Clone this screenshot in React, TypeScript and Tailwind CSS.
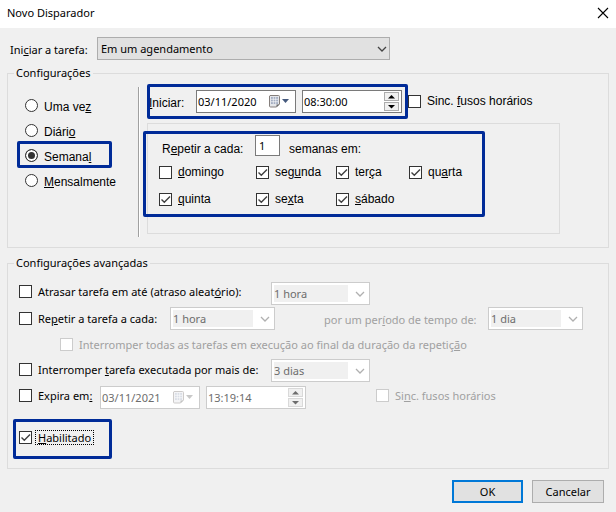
import React, { useState } from 'react';

interface CheckProps {
  children: React.ReactNode;
  defaultChecked?: boolean;
  disabled?: boolean;
  focused?: boolean;
  className?: string;
}

const Check: React.FC<CheckProps> = ({ children, defaultChecked, disabled, focused, className = '' }) => (
  <label className={`flex items-center gap-[6px] leading-[13px] whitespace-nowrap ${disabled ? 'text-[#a0a0a0]' : ''} ${className}`}>
    <span className="grid shrink-0">
      <input
        type="checkbox"
        defaultChecked={defaultChecked}
        disabled={disabled}
        className="peer col-start-1 row-start-1 appearance-none size-[13px] bg-white border border-[#333] disabled:border-[#ccc]"
      />
      <svg viewBox="0 0 13 13" className="col-start-1 row-start-1 size-[13px] pointer-events-none hidden peer-checked:block">
        <path d="M2.5 6.5 L5.3 9.3 L11 3.4" fill="none" stroke="#404040" strokeWidth="1.4" />
      </svg>
    </span>
    <span className={focused ? '-ml-[3px] px-[2px] border border-dotted border-black' : ''}>{children}</span>
  </label>
);

const Highlight: React.FC<{ className: string }> = ({ className }) => (
  <span className={`absolute border-3 border-[#002b98] rounded-[2px] pointer-events-none ${className}`} />
);

const Chevron: React.FC<{ color: string }> = ({ color }) => (
  <svg viewBox="0 0 19 17" className="w-[19px] h-[17px] shrink-0 pointer-events-none">
    <path d="M8 7 L12 11 L16 7" fill="none" stroke={color} strokeWidth="1.3" />
  </svg>
);

const DisabledSelect: React.FC<{ value: string; label: string; className: string }> = ({ value, label, className }) => (
  <div className={`flex items-center h-[23px] p-[2px] bg-white border border-[#ccc] shrink-0 ${className}`}>
    <select disabled aria-label={label} className="appearance-none flex-1 min-w-0 h-[17px] leading-[17px] bg-[#f0f0f0] text-[#6d6d6d]">
      <option>{value}</option>
    </select>
    <Chevron color="#b0b0b0" />
  </div>
);

const DateBox: React.FC<{ value: string; id?: string; disabled?: boolean }> = ({ value, id, disabled }) => (
  <div className={`flex items-center w-[100px] h-[23px] pl-px pr-[6px] bg-white border shrink-0 ${disabled ? 'border-[#ccc] text-[#6d6d6d]' : 'border-[#7a7a7a]'}`}>
    <input id={id} type="text" defaultValue={value} disabled={disabled} aria-label="Data" className="flex-1 min-w-0 bg-transparent outline-none" />
    <svg viewBox="0 0 20 13" className={`w-[20px] h-[13px] shrink-0 ${disabled ? 'opacity-40' : ''}`}>
      <path d="M1 .5 H9.5 Q10.5 .5 10.5 1.5 V9 L7.5 12 H1.5 Q.5 12 .5 11 V1 Z" fill="#e4e6ea" stroke="#857f7c" />
      <path d="M2 2 H9 V9 H2 Z" fill="#a4aec2" />
      <path d="M4.3 2 V9 M6.7 2 V9 M2 4.3 H9 M2 6.7 H9" stroke="#fff" strokeWidth=".6" />
      <path d="M7.5 12 V9.5 H10.5 Z" fill="#666" />
      <path d="M13 4 H20 L16.5 8 Z" fill={disabled ? '#777' : '#44597d'} />
    </svg>
  </div>
);

const TimeBox: React.FC<{ value: string; disabled?: boolean }> = ({ value, disabled }) => (
  <div className={`flex items-center w-[100px] h-[23px] pl-px pr-[2px] bg-white border shrink-0 ${disabled ? 'border-[#ccc] text-[#6d6d6d]' : 'border-[#7a7a7a]'}`}>
    <input type="text" defaultValue={value} disabled={disabled} aria-label="Hora" className="flex-1 min-w-0 bg-transparent outline-none" />
    <div className="flex flex-col gap-px shrink-0">
      {['M3 5.5 H10 L6.5 2 Z', 'M3 2 H10 L6.5 5.5 Z'].map((d, i) => (
        <button
          key={d}
          type="button"
          disabled={disabled}
          aria-label={i === 0 ? 'Aumentar' : 'Diminuir'}
          className="w-[15px] h-[9px] bg-[#f0f0f0] border border-[#acacac] disabled:border-[#d9d9d9]"
        >
          <svg viewBox="0 0 13 7" className="w-[13px] h-[7px]">
            <path d={d} fill={disabled ? '#6d6d6d' : '#000'} />
          </svg>
        </button>
      ))}
    </div>
  </div>
);

const frequencies = [
  { id: 'once', label: <>Uma ve<u>z</u></> },
  { id: 'daily', label: <>Diári<u>o</u></> },
  { id: 'weekly', label: <>Semana<u>l</u></> },
  { id: 'monthly', label: <><u>M</u>ensalmente</> },
];

const weekdays = [
  { id: 'dom', label: <><u>d</u>omingo</>, checked: false },
  { id: 'seg', label: <>seg<u>u</u>nda</>, checked: true },
  { id: 'ter', label: <>ter<u>ç</u>a</>, checked: true },
  { id: 'qua', label: <>qu<u>a</u>rta</>, checked: true },
  { id: 'qui', label: <><u>q</u>uinta</>, checked: true },
  { id: 'sex', label: <>se<u>x</u>ta</>, checked: true },
  { id: 'sab', label: <><u>s</u>ábado</>, checked: true },
];

const App: React.FC = () => {
  const [frequency, setFrequency] = useState<string>('weekly');

  return (
    <div className="min-h-screen bg-[#f0f0f0] text-black text-[11px] leading-4 font-['Noto_Sans','Open_Sans',sans-serif]">
      <header className="flex items-center justify-between h-7 px-[7px] pb-[2px] bg-white">
        <h1>Novo Disparador</h1>
        <button type="button" aria-label="Fechar">
          <svg viewBox="0 0 12 12" className="size-[12px]">
            <path d="M1 1 L11 11 M11 1 L1 11" stroke="#000" strokeWidth="1.1" />
          </svg>
        </button>
      </header>

      <form className="px-[7px] pt-[9px] pb-[10px]" onSubmit={(e) => e.preventDefault()}>
        <div className="flex items-center pl-[3px]">
          <label htmlFor="begin" className="w-[87px] pt-[2px] shrink-0">Ini<u>c</u>iar a tarefa:</label>
          <div className="flex items-center w-[293px] h-[23px] bg-[#e1e1e1] border border-[#adadad]">
            <select id="begin" className="appearance-none flex-1 h-full pl-[3px] outline-none">
              <option>Em um agendamento</option>
            </select>
            <Chevron color="#444" />
          </div>
        </div>

        <fieldset className="mt-[5px] pb-[10px] border border-[#dcdcdc]">
          <legend className="ml-[6px] px-[2px]">Configurações</legend>
          <div className="flex mt-[6px] text-[12px] font-['Liberation_Sans',Arial,sans-serif]">
            <div className="w-[130px] shrink-0 pl-[17px] pt-[6px]">
              {frequencies.map((f) => (
                <label key={f.id} className="relative flex items-center gap-[6px] h-[25px]">
                  <input
                    type="radio"
                    name="frequency"
                    checked={frequency === f.id}
                    onChange={() => setFrequency(f.id)}
                    className="appearance-none size-[13px] rounded-full border border-[#333] bg-white checked:bg-[#333] checked:shadow-[inset_0_0_0_2px_white]"
                  />
                  <span className="pt-[2px]">{f.label}</span>
                  {f.id === 'weekly' && <Highlight className="-left-2 w-[95px] -top-[2px] h-[27px]" />}
                </label>
              ))}
            </div>
            <div className="w-[2px] bg-white border-l border-[#a0a0a0] shrink-0" />
            <div className="flex-1 pl-[7px] pt-[3px] pb-[3px]">
              <div className="flex items-center gap-[6px] pl-[2px]">
                <div className="relative flex items-center">
                  <label htmlFor="start" className="w-[47px] pt-[2px]"><u>I</u>niciar:</label>
                  <div className="flex gap-[6px] text-[11px] font-['Noto_Sans','Open_Sans',sans-serif]">
                    <DateBox id="start" value="03/11/2020" />
                    <TimeBox value="08:30:00" />
                  </div>
                  <Highlight className="-left-[2px] -right-[6px] -top-[6px] -bottom-[6px]" />
                </div>
                <Check>Sinc. <u>f</u>usos horários</Check>
              </div>

              <div className="mt-[10px] mr-12 pl-[11px] pt-[11px] pb-[27px] border border-[#dcdcdc]">
                <div className="relative w-80">
                  <div className="flex items-center h-[21px] pl-[3px]">
                    <label htmlFor="every" className="w-[93px] pt-[6px]">R<u>e</u>petir a cada:</label>
                    <input
                      id="every"
                      type="text"
                      defaultValue="1"
                      className="w-[25px] h-[21px] px-[3px] bg-white border border-[#7a7a7a] outline-none text-[11px] font-['Noto_Sans','Open_Sans',sans-serif]"
                    />
                    <span className="pl-[9px] pt-[6px]">semanas em:</span>
                  </div>
                  <div className="grid grid-cols-[97px_80px_73px_1fr] gap-y-[14px] mt-[10px]">
                    {weekdays.map((d) => (
                      <Check key={d.id} defaultChecked={d.checked}>{d.label}</Check>
                    ))}
                  </div>
                  <Highlight className="-left-4 -right-[6px] -top-1 -bottom-[11px]" />
                </div>
              </div>
            </div>
          </div>
        </fieldset>

        <fieldset className="mt-[7px] pb-[23px] border border-[#dcdcdc]">
          <legend className="ml-[6px] px-[2px]">Configurações avançadas</legend>
          <div className="flex flex-col gap-[2px] pl-[11px] mt-[11px]">
            <div className="flex items-center">
              <Check className="w-[252px] pb-1">Atrasar tarefa em até (atraso aleat<u>ó</u>rio):</Check>
              <DisabledSelect label="Atraso aleatório" value="1 hora" className="w-[99px]" />
            </div>
            <div className="flex items-center">
              <Check className="w-[151px]">Re<u>p</u>etir a tarefa a cada:</Check>
              <DisabledSelect label="Intervalo de repetição" value="1 hora" className="w-[105px]" />
              <span className="w-[213px] pl-[49px] pt-[2px] whitespace-nowrap text-[#a0a0a0]">por um per<u>í</u>odo de tempo de:</span>
              <DisabledSelect label="Período de tempo" value="1 dia" className="w-[95px]" />
            </div>
            <Check disabled className="h-[25px] pl-[41px]">Interromper todas as tarefas em execução ao final da duração da repetiç<u>ã</u>o</Check>
            <div className="flex items-center">
              <Check className="w-[252px] pb-[2px]">Interromper <u>t</u>arefa executada por mais de:</Check>
              <DisabledSelect label="Tempo máximo de execução" value="3 dias" className="w-[99px]" />
            </div>
            <div className="flex items-center mt-[2px]">
              <Check className="w-[81px] pb-1">Expira em<u>:</u></Check>
              <div className="flex gap-[6px]">
                <DateBox value="03/11/2021" disabled />
                <TimeBox value="13:19:14" disabled />
              </div>
              <Check disabled className="pl-[70px] pb-1">Si<u>n</u>c. fusos horários</Check>
            </div>
            <div className="flex mt-[19px]">
              <div className="relative">
                <Check defaultChecked focused><u>H</u>abilitado</Check>
                <Highlight className="-left-[6px] w-[99px] -top-[11px] h-10" />
              </div>
            </div>
          </div>
        </fieldset>

        <div className="flex justify-end gap-[9px] mt-[11px] pr-[5px]">
          <button type="submit" className="w-[71px] h-[23px] bg-[#e1e1e1] border-2 border-[#0078d7]">OK</button>
          <button type="button" className="w-[72px] h-[23px] bg-[#e1e1e1] border border-[#adadad]">Cancelar</button>
        </div>
      </form>
    </div>
  );
};

export default App;
